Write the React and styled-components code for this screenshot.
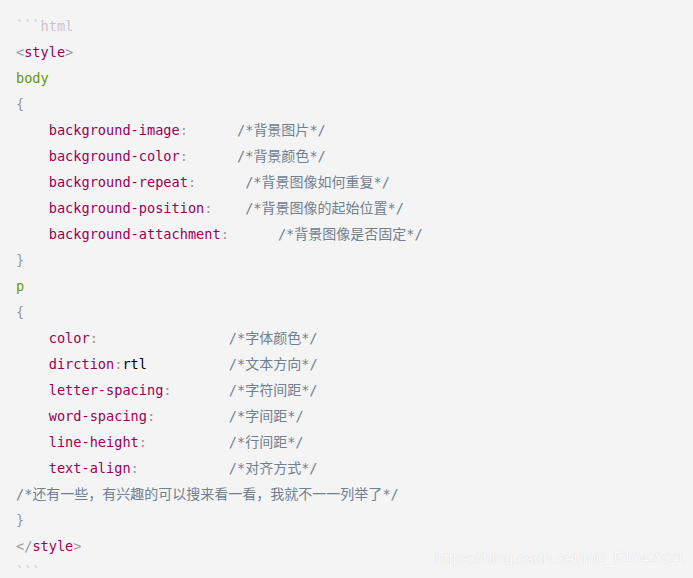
import React from "react";
import styled, { createGlobalStyle } from "styled-components";

const Global = createGlobalStyle`
  html, body { margin: 0; padding: 0; background: #f4f4f4; }
  body { width: 693px; height: 578px; overflow: hidden; }
`;

const Block = styled.div`
  position: relative;
  box-sizing: border-box;
  width: 693px;
  height: 578px;
  padding: 13px 16px 0 16px;
  background: #f4f4f4;
  font-family: "DejaVu Sans Mono", "Noto Sans CJK SC", monospace;
  font-size: 13.6px;
  line-height: 26px;
  color: #333;
  overflow: hidden;
`;

const Line = styled.div`
  white-space: pre;
  height: 26px;
`;

const Fence = styled.span`
  color: #c8c4cc;
`;
const Punct = styled.span`
  color: #999;
`;
const Tag = styled.span`
  color: #905;
`;
const Selector = styled.span`
  color: #690;
`;
const Value = styled.span`
  color: #000;
`;
const Comment = styled.span`
  color: slategray;
  font-family: "DejaVu Sans Mono", "Noto Sans CJK SC", monospace;
`;
const Cjk = styled.span`
  font-size: 14px;
`;

const Watermark = styled.div`
  position: absolute;
  right: 8px;
  bottom: 9px;
  font-family: "Liberation Sans", Arial, sans-serif;
  font-size: 16px;
  line-height: 20px;
  color: #fbfbfb;
  text-shadow: 0 0 1px rgba(0, 0, 0, 0.18);
`;

const CommentText = ({ text }) => {
  const parts = text.split(/([^\x00-\x7f]+)/);
  return (
    <Comment>
      {parts.map((p, i) =>
        /[^\x00-\x7f]/.test(p) ? <Cjk key={i}>{p}</Cjk> : <React.Fragment key={i}>{p}</React.Fragment>
      )}
    </Comment>
  );
};

const bodyProps = [
  ["background-image:", 6, "/*背景图片*/"],
  ["background-color:", 6, "/*背景颜色*/"],
  ["background-repeat:", 6, "/*背景图像如何重复*/"],
  ["background-position:", 4, "/*背景图像的起始位置*/"],
  ["background-attachment:", 6, "/*背景图像是否固定*/"],
];

const pProps = [
  ["color:", "", 16, "/*字体颜色*/"],
  ["dirction:", "rtl", 10, "/*文本方向*/"],
  ["letter-spacing:", "", 7, "/*字符间距*/"],
  ["word-spacing:", "", 9, "/*字间距*/"],
  ["line-height:", "", 10, "/*行间距*/"],
  ["text-align:", "", 11, "/*对齐方式*/"],
];

const PropLine = ({ name, value, gap, comment }) => {
  const idx = name.indexOf(":");
  return (
    <Line>
      {"    "}
      <Tag>{name.slice(0, idx)}</Tag>
      <Punct>:</Punct>
      {value ? <Value>{value}</Value> : null}
      {" ".repeat(gap)}
      <CommentText text={comment} />
    </Line>
  );
};

export default function App() {
  return (
    <>
      <Global />
      <Block>
        <Line><Fence>```html</Fence></Line>
        <Line><Punct>&lt;</Punct><Tag>style</Tag><Punct>&gt;</Punct></Line>
        <Line><Selector>body</Selector></Line>
        <Line><Punct>{"{"}</Punct></Line>
        {bodyProps.map(([n, g, c]) => (
          <PropLine key={n} name={n} gap={g} comment={c} />
        ))}
        <Line><Punct>{"}"}</Punct></Line>
        <Line><Selector>p</Selector></Line>
        <Line><Punct>{"{"}</Punct></Line>
        {pProps.map(([n, v, g, c]) => (
          <PropLine key={n} name={n} value={v} gap={g} comment={c} />
        ))}
        <Line><CommentText text="/*还有一些，有兴趣的可以搜来看一看，我就不一一列举了*/" /></Line>
        <Line><Punct>{"}"}</Punct></Line>
        <Line><Punct>&lt;/</Punct><Tag>style</Tag><Punct>&gt;</Punct></Line>
        <Line><Fence>```</Fence></Line>
        <Watermark>https://blog.csdn.net/m0_51042321</Watermark>
      </Block>
    </>
  );
}
